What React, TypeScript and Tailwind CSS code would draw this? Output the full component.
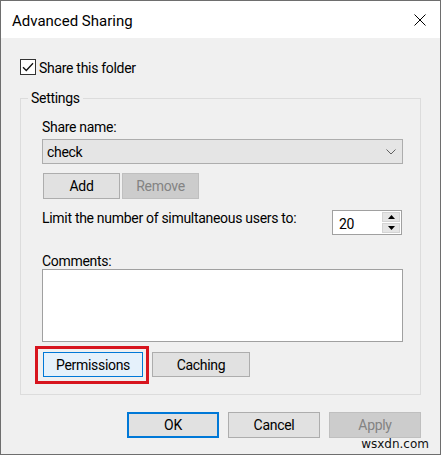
import React from "react";

function Btn({
  children,
  className = "",
}: {
  children: React.ReactNode;
  className?: string;
}) {
  return (
    <div className={"flex items-center justify-center border " + className}>
      {children}
    </div>
  );
}

export default function App() {
  return (
    <div className="w-[441px] h-[455px] relative bg-[#f0f0f0] border border-[#6e6e6e] flex flex-col font-['Roboto',sans-serif] text-[14px] leading-[20px] tracking-[-0.3px] text-black overflow-hidden whitespace-nowrap">
      <div className="h-[37px] bg-white flex items-center pl-[11px] pr-[14px] shrink-0">
        <span className="flex-1 text-[15px] tracking-normal mt-[2px]">Advanced Sharing</span>
        <svg width="12" height="12" viewBox="0 0 12 12">
          <path d="M0.5 0.5L11.5 11.5M11.5 0.5L0.5 11.5" stroke="#000" strokeWidth="1" />
        </svg>
      </div>
      <div className="flex-1 flex flex-col px-[19px]">
        <div className="mt-[21px] flex items-center h-[16px] gap-[3px]">
          <svg width="16" height="16" viewBox="0 0 16 16" className="shrink-0">
            <rect x="0.5" y="0.5" width="15" height="15" fill="#fff" stroke="#333" />
            <path d="M3 8.2L6.3 11.5L13 4.2" fill="none" stroke="#111" strokeWidth="1.3" />
          </svg>
          <span className="mt-[1px]">Share this folder</span>
        </div>
        <fieldset className="mt-[13px] border border-[#dcdcdc] w-[401px]">
          <legend className="ml-[7px] px-[3px] leading-[20px]">Settings</legend>
          <div className="pl-[21px] pr-[17px] pb-[17px] flex flex-col">
            <div className="mt-[8px] h-[20px] pt-[1px]">Share name:</div>
            <div className="mt-[3px] h-[25px] border border-[#adadad] bg-[#e5e5e5] flex items-center pl-[4px] pr-[6px]">
              <span className="flex-1">check</span>
              <svg width="10" height="6" viewBox="0 0 10 6">
                <path d="M0.5 0.5L5 5L9.5 0.5" fill="none" stroke="#606060" strokeWidth="1" />
              </svg>
            </div>
            <div className="mt-[9px] flex gap-[2px] ml-[1px]">
              <Btn className="w-[77px] h-[26px] bg-[#e1e1e1] border-[#adadad]">Add</Btn>
              <Btn className="w-[77px] h-[26px] bg-[#cccccc] border-[#bfbfbf] text-[#838383]">Remove</Btn>
            </div>
            <div className="mt-[9px] flex items-start">
              <span className="h-[20px]">Limit the number of simultaneous users to:</span>
              <div className="ml-auto mr-[1px] mt-[2px] w-[70px] h-[25px] border border-[#a0a0a0] bg-white flex">
                <span className="flex-1 pl-[6px] pt-[3px]">20</span>
                <div className="w-[19px] flex flex-col py-[1px] pr-[1px] gap-[1px]">
                  <div className="flex-1 bg-[#e5e5e5] border border-[#d4d4d4] flex items-center justify-center">
                    <svg width="7" height="4" viewBox="0 0 7 4"><path d="M0 4L3.5 0L7 4Z" fill="#000" /></svg>
                  </div>
                  <div className="flex-1 bg-[#e5e5e5] border border-[#d4d4d4] flex items-center justify-center">
                    <svg width="7" height="4" viewBox="0 0 7 4"><path d="M0 0L3.5 4L7 0Z" fill="#000" /></svg>
                  </div>
                </div>
              </div>
            </div>
            <div className="mt-[18px] h-[16px] leading-[16px]">Comments:</div>
            <div className="h-[73px] border border-[#a0a0a0] bg-white" />
            <div className="mt-[10px] flex gap-[9px] ml-[1px]">
              <div className="relative">
                <Btn className="w-[100px] h-[25px] bg-[#e5f1fb] border-[#0078d7]">Permissions</Btn>
                <div className="absolute left-[-8px] right-[-6px] top-[-6px] bottom-[-7px] border-[3px] border-[#d7141e]" />
              </div>
              <Btn className="w-[98px] h-[25px] bg-[#e1e1e1] border-[#adadad]">Caching</Btn>
            </div>
          </div>
        </fieldset>
        <div className="mt-[17px] flex justify-end gap-[9px]">
          <Btn className="w-[92px] h-[26px] bg-[#e1e1e1] border-2 border-[#0078d7]">OK</Btn>
          <Btn className="w-[92px] h-[26px] bg-[#e1e1e1] border-[#adadad]">Cancel</Btn>
          <Btn className="w-[92px] h-[26px] bg-[#cccccc] border-[#bfbfbf] text-[#838383]">Apply</Btn>
        </div>
      </div>
      <div className="absolute right-[11px] bottom-[3px] text-[12px] leading-[14px] tracking-normal font-['DejaVu_Sans',sans-serif] text-[#111]">
        wsxdn.com
      </div>
    </div>
  );
}
